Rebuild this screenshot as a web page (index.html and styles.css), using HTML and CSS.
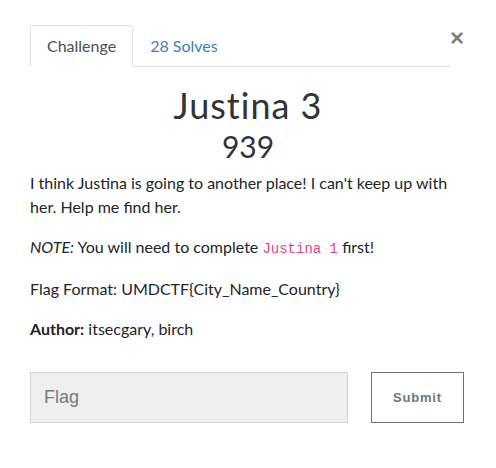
FILE: index.html
```
<!DOCTYPE html>
<html>
<head>
<meta charset="utf-8">
<link rel="stylesheet" href="styles.css">
</head>
<body>
<div class="modal">
  <div class="header">
    <ul class="tabs">
      <li class="tab active">Challenge</li>
      <li class="tab">28 Solves</li>
    </ul>
    <span class="close">&times;</span>
  </div>
  <div class="titles">
    <h3 class="name">Justina 3</h3>
    <h4 class="value">939</h4>
  </div>
  <div class="desc">
    <p>I think Justina is going to another place! I can't keep up with her. Help me find her.</p>
    <p><em>NOTE:</em> You will need to complete <code>Justina 1</code> first!</p>
    <p>Flag Format: UMDCTF{City_Name_Country}</p>
    <p><strong>Author:</strong> itsecgary, birch</p>
  </div>
  <form class="form">
    <input class="flag" type="text" placeholder="Flag">
    <button class="submit" type="button">Submit</button>
  </form>
</div>
</body>
</html>
```
FILE: styles.css
```
* { box-sizing: border-box; }
html, body { margin: 0; padding: 0; background: #fff; }
body {
  font-family: "Lato", "Liberation Sans", sans-serif;
  font-size: 16px;
  line-height: 24px;
  color: #212529;
}
.modal {
  width: 496px;
  padding: 25px 30px 0 30px;
}
.header {
  display: flex;
  align-items: flex-start;
  width: 434px;
}
.tabs {
  list-style: none;
  margin: 0;
  padding: 0;
  display: flex;
  width: 420px;
  border-bottom: 1px solid #dee2e6;
}
.tab {
  padding: 8px 16px;
  border: 1px solid transparent;
  border-top-left-radius: 4px;
  border-top-right-radius: 4px;
  margin-bottom: -1px;
  color: #3a80c0;
  line-height: 24px;
}
.tab.active {
  color: #495057;
  background: #fff;
  border-color: #dee2e6 #dee2e6 #fff;
}
.close {
  margin-left: auto;
  font-family: "Liberation Sans", sans-serif;
  font-size: 24px;
  font-weight: 700;
  line-height: 24px;
  color: #000;
  opacity: 0.5;
  margin-top: 1px;
}
.titles {
  text-align: center;
  padding-top: 17px;
}
.name {
  margin: 0;
  font-weight: 400;
  font-size: 36px;
  line-height: 42px;
  letter-spacing: 1px;
  color: #333;
}
.value {
  margin: 0;
  font-weight: 400;
  font-size: 30px;
  line-height: 40px;
  color: #333;
}
.desc {
  padding-top: 5px;
}
.desc p {
  margin: 0 0 16px 0;
}
code {
  font-family: "Liberation Mono", monospace;
  font-size: 14px;
  color: #e83e8c;
}
.form {
  display: flex;
  gap: 23px;
  padding-top: 15px;
}
.flag {
  width: 318px;
  height: 51px;
  background: #efefef;
  border: 1px solid #ced4da;
  padding: 0 13px;
  font-family: "Liberation Sans", sans-serif;
  font-size: 18px;
  color: #495057;
  outline: none;
}
.flag::placeholder { color: #747b83; }
.submit {
  width: 93px;
  height: 51px;
  background: #fff;
  border: 1px solid #6c757d;
  color: #6c757d;
  font-family: "Liberation Sans", sans-serif;
  font-weight: 700;
  font-size: 13px;
  letter-spacing: 0.8px;
}
```
